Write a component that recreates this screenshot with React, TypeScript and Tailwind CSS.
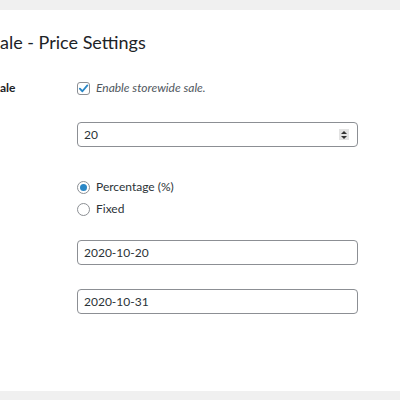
const font = { fontFamily: 'Lato, "Noto Sans", Arial, sans-serif' };

const Input = ({ value, spinner = false }: { value: string; spinner?: boolean }) => (
  <div className="flex items-center w-[281px] h-[25px] rounded-[4px] border border-[#8c8f94] bg-white pl-[6px] pr-[8px] text-[12px] text-[#2c3338]">
    <span className="flex-1">{value}</span>
    {spinner && (
      <span className="flex flex-col items-center justify-center gap-[2px] w-[10px] h-[11px] bg-[#e3e3e3]">
        <span className="w-0 h-0 border-x-[3px] border-x-transparent border-b-[3px] border-b-[#333]" />
        <span className="w-0 h-0 border-x-[3px] border-x-transparent border-t-[3px] border-t-[#333]" />
      </span>
    )}
  </div>
);

const Radio = ({ checked, label }: { checked?: boolean; label: string }) => (
  <div className="flex items-center gap-[6px] h-[22px]">
    <span className="flex items-center justify-center w-[13px] h-[13px] rounded-full border border-[#8c8f94] bg-white">
      {checked && <span className="w-[7px] h-[7px] rounded-full bg-[#2a87c6]" />}
    </span>
    <span className="text-[12px] text-[#2c3338]">{label}</span>
  </div>
);

export default function App() {
  return (
    <div className="w-[400px] h-[400px] bg-[#f0f0f0] pt-[10px] pb-[9px]" style={font}>
      <div className="h-full bg-white flex flex-col">
        <h1 className="mt-[19px] h-[26px] text-[18px] leading-[26px] text-[#1d2327] whitespace-nowrap">ale - Price Settings</h1>

        <div className="flex mt-[22px] h-[22px] items-center">
          <div className="w-[77px] text-[12px] font-bold text-[#1d2327]">ale</div>
          <div className="flex items-center gap-[6px]">
            <span className="flex items-center justify-center w-[13px] h-[13px] rounded-[3px] border border-[#8c8f94] bg-white">
              <svg width="11" height="11" viewBox="0 0 12 12">
                <path d="M2 6.2 L4.8 9 L10.2 2.6" fill="none" stroke="#2a87c6" strokeWidth="2" strokeLinecap="round" strokeLinejoin="round" />
              </svg>
            </span>
            <span className="text-[12px] italic text-[#50575e]">Enable storewide sale.</span>
          </div>
        </div>

        <div className="flex mt-[23px]">
          <div className="w-[77px]" />
          <Input value="20" spinner />
        </div>

        <div className="flex mt-[29px]">
          <div className="w-[77px]" />
          <div className="flex flex-col">
            <Radio checked label="Percentage (%)" />
            <Radio label="Fixed" />
          </div>
        </div>

        <div className="flex mt-[20px]">
          <div className="w-[77px]" />
          <Input value="2020-10-20" />
        </div>

        <div className="flex mt-[24px]">
          <div className="w-[77px]" />
          <Input value="2020-10-31" />
        </div>
      </div>
    </div>
  );
}
